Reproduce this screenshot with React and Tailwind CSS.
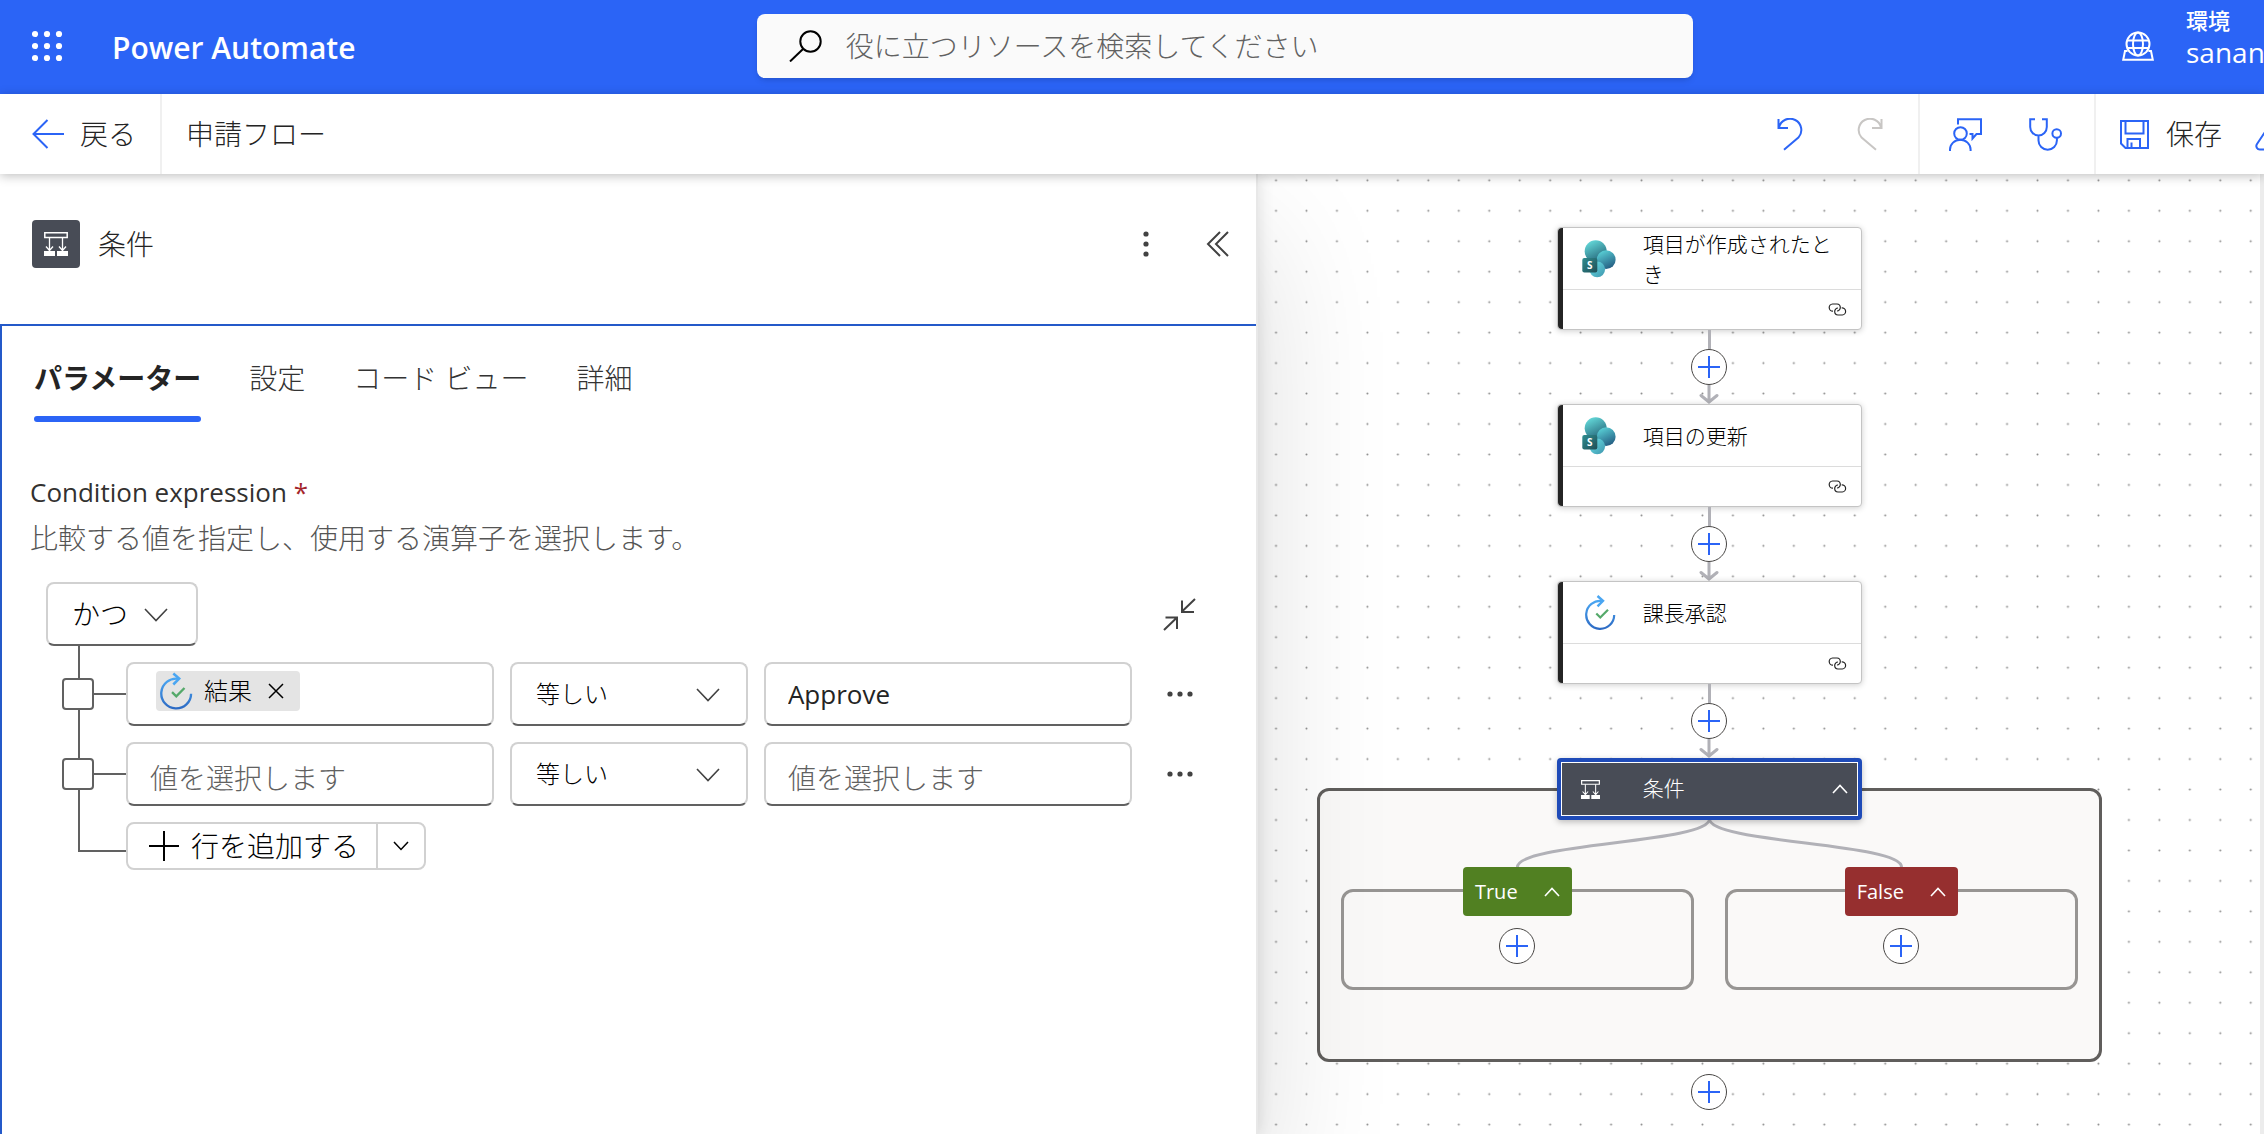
import { useState } from "react";

const TABS = ["パラメーター", "設定", "コード ビュー", "詳細"];

const ROWS = [
  { id: 1, token: "結果", operator: "等しい", value: "Approve" },
  { id: 2, token: null, operator: "等しい", value: "" },
];

const ACTIONS = [
  { id: "trigger", title: "項目が作成されたとき", icon: "sharepoint" },
  { id: "update", title: "項目の更新", icon: "sharepoint" },
  { id: "approval", title: "課長承認", icon: "approval" },
];

function Icon({ w, h, stroke = 2, className = "", children }) {
  return (
    <svg
      width={w}
      height={h}
      viewBox={`0 0 ${w} ${h}`}
      fill="none"
      stroke="currentColor"
      strokeWidth={stroke}
      className={`shrink-0 ${className}`}
      aria-hidden="true"
    >
      {children}
    </svg>
  );
}

function ConditionIcon({ size }) {
  return (
    <svg width={size} height={size} viewBox="0 0 24 24" fill="none" stroke="white" className="shrink-0" aria-hidden="true">
      <path d="M.8.8h22.4v4.6H.8z" strokeWidth="1.5" />
      <path d="M5.5 5.5v12.5M18.5 5.5v12.5M2 14.5l3.5 4 3.5-4M15 14.5l3.5 4 3.5-4" strokeWidth="1.3" />
      <path d="M0 19h11v5H0zM13 19h11v5H13z" fill="white" stroke="none" />
    </svg>
  );
}

function ApprovalIcon({ className = "" }) {
  return (
    <svg viewBox="0 0 31 35" fill="none" className={`shrink-0 ${className}`} aria-hidden="true">
      <defs>
        <linearGradient id="ring" x1="0" y1="0" x2="0" y2="1">
          <stop offset="0" stopColor="#4aa6f2" />
          <stop offset="1" stopColor="#2d6bc4" />
        </linearGradient>
      </defs>
      <path d="M29.2 20A14 14 0 1 1 17 6" stroke="url(#ring)" strokeWidth="2.2" />
      <path d="M12.5 1l5.5 4.8-5.5 5.6" stroke="#4aa6f2" strokeWidth="2.4" />
      <path d="M11.3 18.5l4 4 7.7-7.8" stroke="#55a96a" strokeWidth="2.2" />
    </svg>
  );
}

function SharePointIcon() {
  return (
    <svg width="34" height="38" viewBox="0 0 34 38" className="shrink-0" aria-hidden="true">
      <defs>
        <linearGradient id="spTop" x1="0.2" y1="0" x2="0.7" y2="1">
          <stop offset="0.1" stopColor="#5fd0d2" />
          <stop offset="1" stopColor="#225f74" />
        </linearGradient>
        <linearGradient id="spRight" x1="0.2" y1="0" x2="0.7" y2="1">
          <stop offset="0.1" stopColor="#55c8d0" />
          <stop offset="1" stopColor="#235a80" />
        </linearGradient>
        <linearGradient id="spLow" x1="0" y1="0" x2="1" y2="1">
          <stop offset="0.3" stopColor="#5ccbd6" />
          <stop offset="1" stopColor="#3f95ad" />
        </linearGradient>
        <linearGradient id="spBox" x1="0" y1="0" x2="1" y2="1">
          <stop offset="0" stopColor="#2f8d90" />
          <stop offset="1" stopColor="#1f4e56" />
        </linearGradient>
      </defs>
      <circle cx="13.7" cy="11.3" r="11" fill="url(#spTop)" />
      <circle cx="24.2" cy="19.7" r="9.4" fill="url(#spRight)" />
      <circle cx="15.2" cy="29.3" r="7.9" fill="url(#spLow)" />
      <rect x="0.3" y="18" width="15" height="14.5" rx="2" fill="url(#spBox)" />
      <text x="7.8" y="28.8" textAnchor="middle" fontSize="10" fontWeight="700" fill="white">
        S
      </text>
    </svg>
  );
}

function ChevronDown({ className = "" }) {
  return (
    <Icon w={24} h={14} stroke={1.6} className={className}>
      <path d="M1 1l11 11.5L23 1" />
    </Icon>
  );
}

function ChevronUp() {
  return (
    <Icon w={16} h={10} stroke={1.6}>
      <path d="M1 9l7-7.5L15 9" />
    </Icon>
  );
}

function LinkIcon() {
  return (
    <Icon w={19} h={13} stroke={1.2} className="text-[#242424]">
      <path d="M5 8.2A3.6 3.6 0 0 1 4.6 1H9a3.5 3.5 0 0 1 3.3 3.5A3.4 3.4 0 0 1 9 8" />
      <path d="M13.7 4.8a3.6 3.6 0 0 1 .6 7.2H10a3.5 3.5 0 0 1-3.3-3.5A3.4 3.4 0 0 1 10 5" />
    </Icon>
  );
}

function Dots() {
  return (
    <svg width="28" height="6" viewBox="0 0 28 6" fill="#424242" aria-hidden="true">
      <circle cx="4" cy="3" r="2.6" />
      <circle cx="14" cy="3" r="2.6" />
      <circle cx="24" cy="3" r="2.6" />
    </svg>
  );
}

function Header() {
  return (
    <header className="flex h-[94px] shrink-0 items-center overflow-hidden bg-[#2b64f6] pb-0.5 text-white">
      <div className="flex w-1/3 items-center gap-12 pl-8">
        <button aria-label="アプリ起動ツール">
          <svg width="32" height="32" viewBox="0 0 32 32" fill="white" aria-hidden="true">
            {[4, 16, 28].map((y) => [3, 15, 27].map((x) => <circle key={`${x}-${y}`} cx={x} cy={y} r="3.1" />))}
          </svg>
        </button>
        <a href="#" className="pt-1 text-[30px] leading-10 font-semibold">
          Power Automate
        </a>
      </div>
      <label className="ml-0.5 flex h-16 w-[936px] items-center gap-6 rounded-lg bg-[#fafafa] px-8 shadow-md">
        <Icon w={33} h={32} className="text-black">
          <circle cx="21.5" cy="11.5" r="10.2" />
          <path d="M14.3 18.7L1 31.5" />
        </Icon>
        <input
          type="search"
          aria-label="検索"
          placeholder="役に立つリソースを検索してください"
          className="min-w-0 flex-1 bg-transparent text-[28px] text-[#242424] outline-none placeholder:text-[#616161]"
        />
      </label>
      <button className="ml-auto flex w-[142px] shrink-0 items-center gap-8 text-left">
        <Icon w={32} h={30}>
          <circle cx="16" cy="13" r="11.5" />
          <ellipse cx="16" cy="13" rx="5" ry="11.5" />
          <path d="M5.5 9.5h21M5.5 17h21M5.5 20H3L1.2 28.8h29.6L29 20h-2.5" />
        </Icon>
        <span className="block pb-4 whitespace-nowrap">
          <span className="block text-[22px] leading-7 font-medium">環境</span>
          <span className="block text-[28px] leading-9 font-normal">sanan</span>
        </span>
      </button>
    </header>
  );
}

function Toolbar() {
  return (
    <div className="relative z-20 flex h-20 shrink-0 items-stretch bg-white text-[28px] text-[#242424] shadow-[0_2px_10px_rgba(0,0,0,0.25)]">
      <button className="flex items-center gap-4 border-r-2 border-[#f0f0f0] pr-6 pl-8">
        <Icon w={32} h={30} className="text-[#2b64f6]">
          <path d="M32 15H1.5M15.5 1L1.5 15l14 14" />
        </Icon>
        戻る
      </button>
      <h1 className="flex items-center pl-6">申請フロー</h1>
      <div className="ml-auto flex text-[#2b64f6]">
        <div className="flex border-r-2 border-[#f0f0f0] pr-2">
          <button aria-label="元に戻す" className="flex w-20 items-center justify-center">
            <Icon w={26} h={33}>
              <path d="M1.5 1v9H11M2 9.5A11.3 11.3 0 1 1 21.4 19.6L7 31.8" />
            </Icon>
          </button>
          <button aria-label="やり直し" disabled className="flex w-20 items-center justify-center text-[#c8c6c4]">
            <Icon w={26} h={33}>
              <path d="M24.5 1v9H15M24 9.5A11.3 11.3 0 1 0 4.6 19.6L19 31.8" />
            </Icon>
          </button>
        </div>
        <div className="flex border-r-2 border-[#f0f0f0] pr-2 pl-1.5">
          <button aria-label="フィードバック" className="flex w-20 items-center justify-center">
            <Icon w={33} h={33}>
              <circle cx="11.5" cy="15.5" r="6.3" />
              <path d="M1 33v-1.5a10.3 9.7 0 0 1 20.6 0V33M9 6.5V1.2h23V16h-4.500L23.5 20.5V16h-3" />
            </Icon>
          </button>
          <button aria-label="フロー チェッカー" className="flex w-20 items-center justify-center">
            <Icon w={33} h={33}>
              <path d="M6 1.2H1.2V9a8.3 8.5 0 0 0 16.6 0V1.2H13M9.5 17.5v5a9.2 9.2 0 0 0 18.4 0V20" />
              <circle cx="27.7" cy="15.5" r="4.3" />
            </Icon>
          </button>
        </div>
        <div className="flex items-center gap-8 pl-6">
          <button className="flex items-center gap-4">
            <Icon w={30} h={29}>
              <path d="M1 1h27v27H5.5L1 23.5zM5.5 1v12.5h18V1M7.5 28v-9H20v9M11.5 22.5V28" />
            </Icon>
            <span className="text-[#242424]">保存</span>
          </button>
          <button aria-label="テスト" className="w-2.5 overflow-hidden">
            <Icon w={32} h={33}>
              <path d="M13 1v10L3 26a3.5 3.5 0 0 0 3 5.5h20a3.5 3.5 0 0 0 3-5.5L19 11V1M11 1h10" />
            </Icon>
          </button>
        </div>
      </div>
    </div>
  );
}

function Operator({ label, value }) {
  return (
    <div className="relative w-[238px] shrink-0">
      <select
        aria-label={label}
        defaultValue={value}
        className="h-16 w-full appearance-none rounded-lg border-2 border-[#d1d1d1] border-b-[#616161] bg-white px-6 text-2xl font-light text-black outline-none"
      >
        <option>{value}</option>
        <option>等しくない</option>
      </select>
      <ChevronDown className="pointer-events-none absolute top-[26px] right-7 text-[#424242]" />
    </div>
  );
}

function ConditionRow({ row }) {
  return (
    <div className="relative flex items-center">
      <div className="flex w-20 shrink-0 items-center pl-4">
        <input
          type="checkbox"
          aria-label={`行 ${row.id} を選択`}
          className="size-8 shrink-0 appearance-none rounded border-2 border-[#616161] bg-white checked:bg-[#2b64f6]"
        />
        <div className="h-0.5 flex-1 bg-[#616161]" />
      </div>
      <div className="flex min-w-0 flex-1 gap-4">
        <div className="flex h-16 min-w-0 flex-1 items-start rounded-lg border-2 border-[#d1d1d1] border-b-[#616161] bg-white px-[22px]">
          {row.token && (
            <span className="mt-[7px] ml-1.5 flex h-10 shrink-0 items-center rounded bg-[#e4e4e4] px-4 pl-1 text-2xl text-black">
              <ApprovalIcon className="h-[38px] w-[33px]" />
              <span className="pr-4 pl-[11px]">{row.token}</span>
              <button aria-label={`${row.token} を削除`}>
                <Icon w={16} h={16} stroke={1.5}>
                  <path d="M1 1l14 14M15 1L1 15" />
                </Icon>
              </button>
            </span>
          )}
          <input
            aria-label={`行 ${row.id} の左辺`}
            placeholder={row.token ? "" : "値を選択します"}
            className="h-full min-w-0 flex-1 bg-transparent pt-2 text-[28px] text-[#242424] outline-none placeholder:text-[#616161]"
          />
        </div>
        <Operator label={`行 ${row.id} の演算子`} value={row.operator} />
        <input
          aria-label={`行 ${row.id} の右辺`}
          defaultValue={row.value}
          placeholder="値を選択します"
          className="h-16 min-w-0 flex-1 rounded-lg border-2 border-[#d1d1d1] border-b-[#616161] bg-white px-[22px] text-[26px] font-normal text-[#242424] outline-none placeholder:font-light placeholder:text-[#616161] placeholder-shown:pt-2 placeholder-shown:text-[28px]"
        />
      </div>
      <button aria-label="その他" className="flex w-24 shrink-0 justify-center">
        <Dots />
      </button>
    </div>
  );
}

function ConditionBuilder() {
  return (
    <div className="mt-5 pr-7 pl-11">
      <div className="flex items-center justify-between">
        <div className="relative w-[152px]">
          <select
            aria-label="グループの条件"
            defaultValue="かつ"
            className="h-16 w-full appearance-none rounded-lg border-2 border-[#d1d1d1] border-b-[#616161] bg-white pl-6 text-[28px] font-light text-black outline-none"
          >
            <option>かつ</option>
            <option>または</option>
          </select>
          <ChevronDown className="pointer-events-none absolute top-[26px] right-[30px] text-[#424242]" />
        </div>
        <button aria-label="折りたたむ" className="mr-8">
          <Icon w={33} h={33} className="text-[#424242]">
            <path d="M32 1L19 13.5M19 2.5V14h12M1 32l13-12.5M2.5 19.5H14V31" />
          </Icon>
        </button>
      </div>
      <div className="relative flex flex-col gap-4 pt-4">
        <div className="absolute top-0 bottom-[18px] left-8 w-12 border-b-2 border-l-2 border-[#616161]" />
        {ROWS.map((row) => (
          <ConditionRow key={row.id} row={row} />
        ))}
        <div className="relative ml-20 flex h-12 w-[300px] rounded-lg border-2 border-[#d1d1d1] bg-white text-black">
          <button className="flex flex-1 items-center gap-3 pl-[21px] text-[28px]">
            <Icon w={30} h={30}>
              <path d="M15 0v30M0 15h30" />
            </Icon>
            行を追加する
          </button>
          <button aria-label="追加オプション" className="flex w-12 items-center justify-center border-l-2 border-[#d1d1d1]">
            <Icon w={16} h={10} stroke={1.5}>
              <path d="M1 1l7 7.5L15 1" />
            </Icon>
          </button>
        </div>
      </div>
    </div>
  );
}

function SidePanel() {
  const [tab, setTab] = useState(TABS[0]);

  return (
    <aside className="relative z-10 flex w-5/9 shrink-0 flex-col border-r-2 border-[#e8e8e8] bg-white shadow-[0_0_16px_rgba(0,0,0,0.12),0_64px_128px_rgba(0,0,0,0.14)]">
      <div className="flex h-[150px] items-center pr-[26px] pb-[10px] pl-8">
        <div className="flex size-12 items-center justify-center rounded bg-[#484c56]">
          <ConditionIcon size={24} />
        </div>
        <h2 className="pl-[18px] text-[28px] text-[#242424]">条件</h2>
        <button aria-label="その他のコマンド" className="mr-[46px] ml-auto flex h-7 w-7 rotate-90 items-center justify-center">
          <Dots />
        </button>
        <button aria-label="パネルを折りたたむ">
          <Icon w={24} h={26} className="text-[#424242]">
            <path d="M14 1L2 13l12 12M22 1L10 13l12 12" />
          </Icon>
        </button>
      </div>

      <div className="flex-1 border-t-2 border-l-2 border-[#2459c9]">
        <div role="tablist" className="flex gap-12 pt-8 pl-8 text-[28px] leading-10">
          {TABS.map((name) => (
            <button
              key={name}
              role="tab"
              aria-selected={tab === name}
              onClick={() => setTab(name)}
              className={
                tab === name
                  ? "font-bold text-[#242424] after:mt-[18px] after:block after:h-1.5 after:rounded-full after:bg-[#2b64f6]"
                  : "pb-6 text-[#333333]"
              }
            >
              {name}
            </button>
          ))}
        </div>
        <div className="mt-12 pl-7">
          <p className="text-[26px] leading-11 font-normal text-[#323130]">
            Condition expression <span className="text-[#a4262c]">*</span>
          </p>
          <p className="text-[28px] leading-12 text-[#555555]">
            比較する値を指定し、使用する演算子を選択します。
          </p>
        </div>
        <ConditionBuilder />
      </div>
    </aside>
  );
}

function AddButton({ className = "" }) {
  return (
    <button
      aria-label="アクションの追加"
      className={`flex size-9 shrink-0 items-center justify-center rounded-full border border-[#484644] bg-white text-[#2b64f6] ${className}`}
    >
      <Icon w={22} h={22}>
        <path d="M11 0v22M0 11h22" />
      </Icon>
    </button>
  );
}

function Connector() {
  return (
    <div className="flex flex-col items-center">
      <div className="h-[19px] w-[3px] bg-[#b1b1b7]" />
      <AddButton />
      <Icon w={20} h={19} stroke={3} className="text-[#b1b1b7]">
        <path d="M10 0v17M2 10.5l8 6.5 8-6.5" strokeLinecap="round" />
      </Icon>
    </div>
  );
}

function ActionCard({ action }) {
  return (
    <div className="flex h-[103px] w-[305px] rounded-sm border border-[#c4c4c4] bg-white shadow-[0_1px_6px_rgba(0,0,0,0.2)]">
      <div className="w-[5px] rounded-l-sm bg-[#242424]" />
      <div className="flex flex-1 flex-col">
        <div className="flex h-[62px] items-center border-b border-[#dcdcdc] pl-[19px]">
          <div className="w-[61px]">
            {action.icon === "sharepoint" ? <SharePointIcon /> : <ApprovalIcon className="ml-[3px] h-[35px] w-[31px]" />}
          </div>
          <span className="w-[200px] text-[21px] leading-[30px] text-black">{action.title}</span>
        </div>
        <div className="flex flex-1 items-center justify-end pr-[14px]">
          <LinkIcon />
        </div>
      </div>
    </div>
  );
}

function Branch({ label, color }) {
  return (
    <div className="flex flex-1 flex-col items-center">
      <button className={`z-10 -mb-[27px] flex h-[49px] items-center gap-[26px] rounded-sm px-3 text-xl font-normal text-white ${color}`}>
        {label}
        <ChevronUp />
      </button>
      <div className="flex h-[101px] w-full items-end justify-center rounded-xl border-3 border-[#979593] pb-[23px]">
        <AddButton />
      </div>
    </div>
  );
}

function ConditionGroup() {
  return (
    <div className="flex w-[785px] flex-col items-center">
      <button className="z-10 -mb-8 flex h-[62px] w-[305px] items-center rounded-sm border-4 border-[#1f4bb8] bg-[#484c56] pr-[10px] pl-5 text-[21px] text-white shadow-[0_2px_6px_rgba(0,0,0,0.25)] inset-ring inset-ring-white">
        <ConditionIcon size={19} />
        <span className="pl-[43px]">条件</span>
        <span className="ml-auto">
          <ChevronUp />
        </span>
      </button>
      <div className="w-full rounded-xl border-3 border-[#605e5c] bg-[#faf9f8] px-[21px] pt-7 pb-[69px]">
        <svg viewBox="0 0 737 48" fill="none" stroke="#b1b1b7" strokeWidth="3" className="block w-full" aria-hidden="true">
          <path d="M368.500 0C368.500 24 176.500 24 176.500 48M368.500 0C368.500 24 560.500 24 560.500 48" />
        </svg>
        <div className="flex gap-[31px]">
          <Branch label="True" color="bg-[#518022]" />
          <Branch label="False" color="bg-[#962f2f]" />
        </div>
      </div>
    </div>
  );
}

function FlowCanvas() {
  return (
    <main className="relative flex-1 overflow-hidden border-r-4 border-[#ececec] bg-white">
      <svg className="absolute inset-0 h-full w-full" aria-hidden="true">
        <pattern id="grid" x="2.8" y="-8.9" width="30.46" height="30.46" patternUnits="userSpaceOnUse">
          <circle cx="15.23" cy="15.23" r="1" fill="#8a8a8a" />
        </pattern>
        <rect width="100%" height="100%" fill="url(#grid)" />
      </svg>
      <div className="relative ml-[59px] flex w-[785px] flex-col items-center pt-[53px]">
        {ACTIONS.map((action) => (
          <div key={action.id} className="flex flex-col items-center">
            <ActionCard action={action} />
            <Connector />
          </div>
        ))}
        <ConditionGroup />
        <AddButton className="mt-3" />
      </div>
    </main>
  );
}

export default function App() {
  return (
    <div className="flex h-screen flex-col overflow-hidden bg-white font-['Open_Sans','Noto_Sans_CJK_JP',sans-serif] font-light">
      <Header />
      <Toolbar />
      <div className="flex min-h-0 flex-1">
        <SidePanel />
        <FlowCanvas />
      </div>
    </div>
  );
}
